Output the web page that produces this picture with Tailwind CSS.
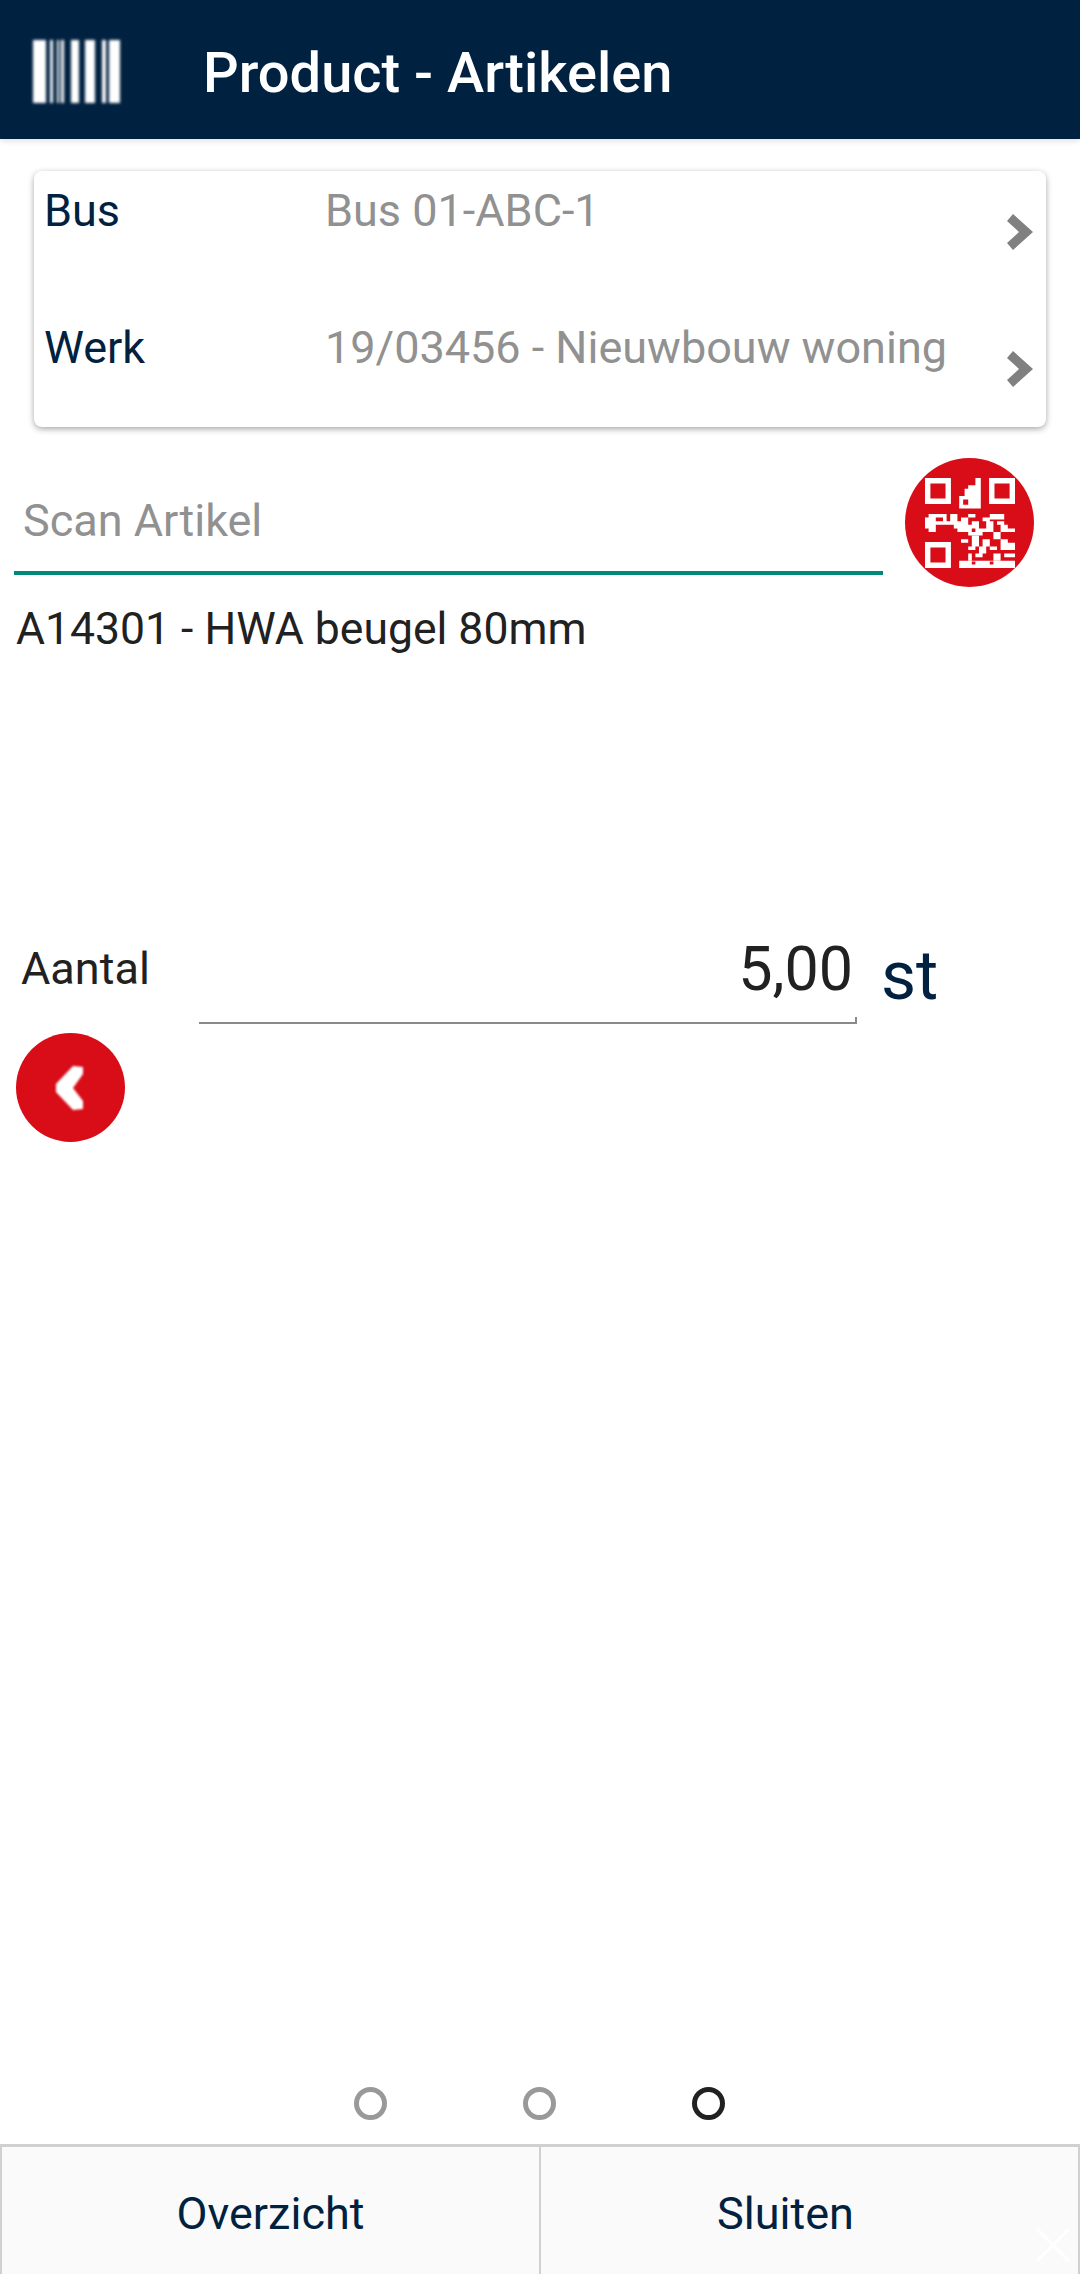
<!DOCTYPE html>
<html lang="nl">
<head>
<meta charset="utf-8">
<title>Product - Artikelen</title>
<script src="https://cdn.jsdelivr.net/npm/@tailwindcss/browser@4"></script>
</head>
<body class="bg-white font-['Roboto',sans-serif] text-[#212121]">
<div class="relative flex h-[2274px] w-[1080px] flex-col overflow-hidden">

	<header class="flex h-[139px] flex-none items-center bg-[#012140] shadow-[0_2px_6px_rgba(0,0,0,0.12)]">
		<svg class="mt-[4px] ml-[33px] h-[63px] w-[87px] blur-[1.5px]" viewBox="0 0 87 63" fill="#fff">
			<rect x="0" y="0" width="13" height="63"/><rect x="17" y="0" width="3" height="63"/><rect x="24" y="0" width="2" height="63"/><rect x="28" y="0" width="3" height="63"/>
			<rect x="38" y="0" width="8" height="63"/><rect x="52" y="0" width="10" height="63"/><rect x="69" y="0" width="4" height="63"/><rect x="76" y="0" width="11" height="63"/>
		</svg>
		<h1 class="ml-[83px] pt-[6px] text-[56px] font-medium text-white">Product - Artikelen</h1>
	</header>

	<section class="mx-[34px] mt-[32px] h-[256px] flex-none rounded-lg bg-white shadow-[0_2px_6px_rgba(0,0,0,0.35)]">
		<div class="flex h-[145px] items-start pt-[8px]">
			<span class="w-[291px] flex-none pl-[10px] text-[45px] leading-[64px] text-[#012140]">Bus</span>
			<span class="flex-1 text-[45px] leading-[64px] text-[#919191]">Bus 01-ABC-1</span>
			<svg class="mt-[35px] mr-[13px] h-[36px] w-[26px]" viewBox="0 0 26 36" fill="#808080"><path d="M0 7 6 0 26 18 6 36 0 29 12 18Z"/></svg>
		</div>
		<div class="flex items-start">
			<span class="w-[291px] flex-none pl-[10px] text-[45px] leading-[64px] text-[#012140]">Werk</span>
			<span class="flex-1 text-[45px] leading-[64px] text-[#919191]">19/03456 - Nieuwbouw woning</span>
			<svg class="mt-[35px] mr-[13px] h-[36px] w-[26px]" viewBox="0 0 26 36" fill="#808080"><path d="M0 7 6 0 26 18 6 36 0 29 12 18Z"/></svg>
		</div>
	</section>

	<div class="mt-[31px] flex flex-none items-start">
		<div class="mt-[31px] ml-[14px] w-[869px] border-b-[4px] border-[#00897b] pb-[18px] pl-[9px] text-[45px] leading-[64px] text-[#919191]">Scan Artikel</div>
		<button class="ml-[22px] flex h-[129px] w-[129px] items-center justify-center rounded-full bg-[#d90d18]">
			<svg class="h-[90px] w-[90px]" viewBox="0 0 25 25" fill="#fff">
				<!-- finder squares -->
				<path fill-rule="evenodd" d="M0 0h7.2v7.2H0zM1.5 1.5v4.2h4.2V1.5zM17.8 0H25v7.2h-7.2zM19.3 1.5v4.2h4.2V1.5zM0 17.8h7.2V25H0zM1.5 19.3v4.2h4.2v-4.2z"/>
				<path fill-rule="evenodd" d="M14 0h1.5v8.5H9.5V5H11V3h1V2h2zM10.6 6v1.4H12V6z"/>
				<path d="M1 10h3v1H1zM0 11h3v3H0zM1 14h2v1H1zM4 10h2v1H4zM5 11h1v2H5zM3 12h2v1H3zM7 10h2v2H7zM6 12h4v1H6zM8 13h3v1H8zM10 11h2v2h-2zM12 10h2v1h-2zM11 13h2v2h-2zM13 12h2v2h-2zM9 14h2v1H9zM12 15h4v1h-4zM14 14h3v1h-3zM17 12h2v3h-2zM16 11h2v1h-2zM18 10h4v1.5h-4zM20 12h2v1h-2zM21 13h2v2h-2zM19 15h2v2h-2zM23 14h2v1h-2z"/>
				<path d="M10 17h2v1h-2zM13 16h2v3h-2zM12 19h2v1h-2zM15 19h2v2h-2zM16 17h2v2h-2zM21 17h2v3h-2zM18 19h2v1h-2zM23 18h2v2h-2zM19 21h2v2h-2zM22 21h3v1h-3zM12 21h1v2h-1zM14 21h2v1h-2z"/>
				<path fill-rule="evenodd" d="M9.5 23H25v2H9.5zM13 23.2v.8h1v-.8zM18 23.2v.8h1v-.8z"/>
			</svg>
		</button>
	</div>

	<p class="mt-[10px] ml-[16px] flex-none text-[44.5px] leading-[64px]">A14301 - HWA beugel 80mm</p>

	<div class="mt-[273px] flex h-[95px] flex-none items-start">
		<span class="ml-[21px] w-[178px] flex-none pt-[3px] text-[45px] leading-[64px]">Aantal</span>
		<div class="relative h-[90px] w-[658px] flex-none border-b-[2px] border-[#8a8a8a] pr-[4px] text-right text-[61px] leading-[70px]">5,00
			<span class="absolute right-0 bottom-0 h-[5px] w-[2px] bg-[#8a8a8a]"></span>
		</div>
		<span class="ml-[24px] pt-[7px] text-[68px] leading-[70px] text-[#012140]">st</span>
	</div>

	<button class="mt-[4px] ml-[16px] flex h-[109px] w-[109px] flex-none items-center justify-center rounded-full bg-[#d90d18]">
		<svg class="mr-[3px] h-[46px] w-[30px] blur-[1px]" viewBox="0 0 30 46" fill="#fff"><path d="M2 19 19 1 29 2 29 9 19 23 29 36 29 44 19 45 2 27Z"/></svg>
	</button>

	<div class="mt-auto flex h-[33px] flex-none justify-center gap-[136px] pr-[1px]">
		<span class="h-[33px] w-[33px] rounded-full border-[5px] border-[#999]"></span>
		<span class="h-[33px] w-[33px] rounded-full border-[5px] border-[#999]"></span>
		<span class="h-[33px] w-[33px] rounded-full border-[5px] border-[#212121]"></span>
	</div>

	<footer class="mt-[24px] flex h-[130px] flex-none border-t-[3px] border-[#d0d0d0] bg-[#fafafa] text-[45px] text-[#012140]">
		<div class="flex w-[539px] items-center justify-center border-l-[2px] border-[#d0d0d0] pt-[6px]">Overzicht</div>
		<div class="flex flex-1 items-center justify-center border-x-[2px] border-[#d0d0d0] pt-[6px] pr-[48px]">Sluiten</div>
	</footer>

	<svg class="absolute right-[10px] bottom-[12px] h-[34px] w-[34px]" viewBox="0 0 34 34" stroke="#fff" stroke-width="3"><path d="M1 1 33 33M33 1 1 33"/></svg>
</div>
</body>
</html>
